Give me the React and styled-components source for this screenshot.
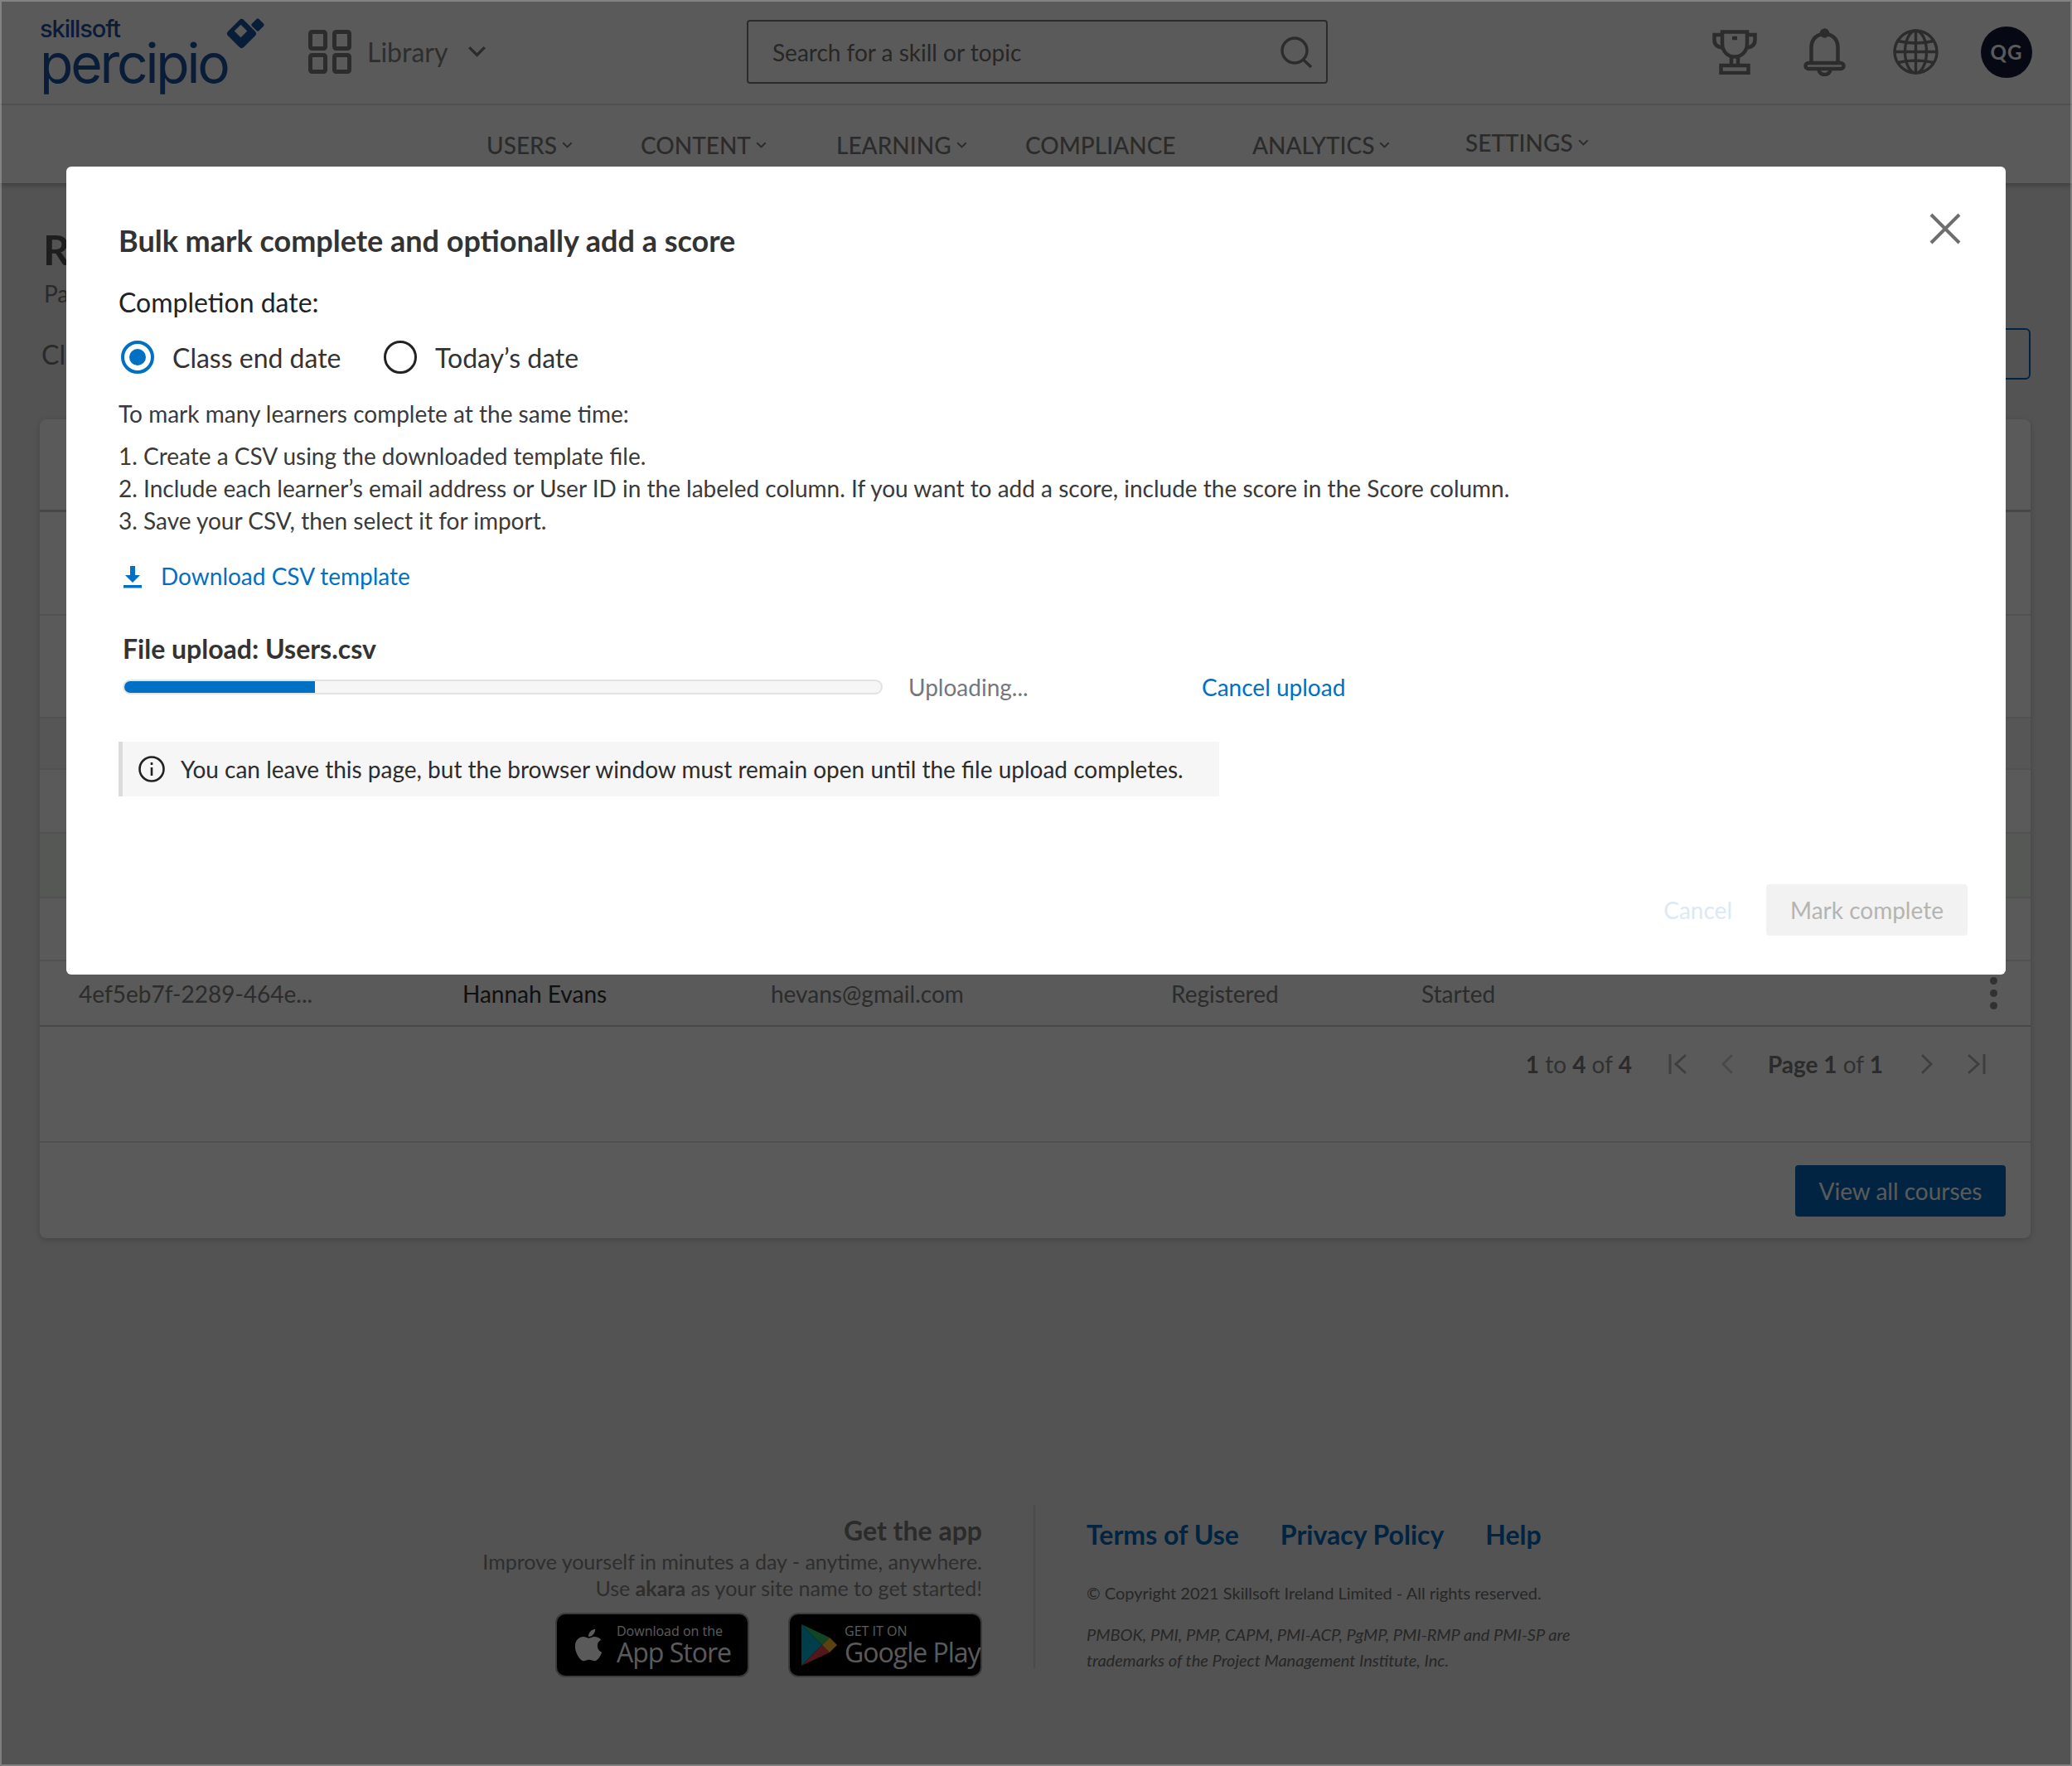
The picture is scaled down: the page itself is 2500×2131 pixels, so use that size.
import React from "react";
import styled, { createGlobalStyle } from "styled-components";
import { FaApple } from "react-icons/fa";

const GlobalStyle = createGlobalStyle`
	html, body {
		margin: 0;
		padding: 0;
		background: #ebebeb;
		font-family: Lato, "Open Sans", sans-serif;
	}
	* { box-sizing: border-box; }
`;

const Page = styled.div`
	position: relative;
	width: 2500px;
	height: 2131px;
	overflow: hidden;
	background: #ebebeb;
`;

const Header = styled.header`
	background: #fff;
	box-shadow: 0 3px 6px rgba(0, 0, 0, 0.25);
`;

const TopBar = styled.div`
	display: flex;
	align-items: center;
	height: 127px;
	padding-left: 48px;
	border-bottom: 2px solid #e2e2e2;
`;

const Logo = styled.div`
	display: flex;
	width: 324px;
	height: 127px;
	padding-top: 22px;
`;

const Wordmark = styled.div`
	display: flex;
	flex-direction: column;
	font-family: Inter, sans-serif;
	color: #1c4f9e;
`;

const BrandSmall = styled.span`
	font-size: 29px;
	line-height: 27px;
	font-weight: 500;
	letter-spacing: -1.1px;
`;

const BrandLarge = styled.span`
	font-size: 66px;
	line-height: 56px;
	font-weight: 400;
	letter-spacing: -3.2px;
`;

const Mark = styled.svg`
	width: 50px;
	height: 50px;
	margin: 0 0 0 -3px;
`;

const Library = styled.div`
	display: flex;
	align-items: center;
	width: 529px;
	font-size: 32px;
	color: #828282;
`;

const LibraryLabel = styled.span`
	margin: 0 24px 0 19px;
`;

const SearchBox = styled.div`
	display: flex;
	align-items: center;
	justify-content: space-between;
	width: 701px;
	height: 77px;
	padding: 0 16px 0 29px;
	border: 2px solid #7a7a7a;
	border-radius: 4px;
	background: #fff;
	font-size: 28px;
	color: #6e6e6e;
`;

const UserIcons = styled.div`
	display: flex;
	align-items: center;
	margin-left: auto;
	padding-right: 48px;
`;

const IconSlot = styled.svg`
	display: block;
	margin-right: ${(p) => p.$gap}px;
	fill: none;
	stroke: #7e7e7e;
	stroke-width: 4.5;
`;

const Avatar = styled.div`
	display: flex;
	align-items: center;
	justify-content: center;
	width: 62px;
	height: 62px;
	border-radius: 50%;
	background: #111c39;
	color: #fff;
	font-size: 24px;
	font-weight: 700;
	letter-spacing: 1px;
`;

const Nav = styled.nav`
	display: flex;
	height: 94px;
	padding: 30px 0 0 587px;
`;

const NavItem = styled.div`
	display: flex;
	align-items: center;
	height: 36px;
	width: ${(p) => p.$width}px;
	margin-top: ${(p) => p.$lift || 0}px;
	font-size: 28px;
	font-weight: 500;
	color: #7a7a7a;
	gap: 6px;
`;

const Content = styled.main`
	padding: 0 50px 0 48px;
`;

const Heading = styled.h1`
	margin: 50px 0 0 4px;
	font-size: 50px;
	line-height: 60px;
	font-weight: 700;
	color: #555;
`;

const Subheading = styled.div`
	margin: 5px 0 0 5px;
	font-size: 28px;
	line-height: 36px;
	color: #777;
`;

const ClassRow = styled.div`
	display: flex;
	align-items: center;
	justify-content: space-between;
	height: 62px;
	margin-top: 24px;
	padding-left: 2px;
	font-size: 32px;
	color: #777;
`;

const OutlineButton = styled.div`
	width: 250px;
	height: 62px;
	border: 2px solid #0068b8;
	border-radius: 6px;
`;

const Card = styled.section`
	margin-top: 48px;
	background: #fff;
	border-radius: 8px;
	box-shadow: 0 2px 8px rgba(0, 0, 0, 0.18);
`;

const TableHead = styled.div`
	height: 112px;
	border-bottom: 3px solid #c9c9c9;
`;

const Row = styled.div`
	display: flex;
	align-items: center;
	height: ${(p) => p.$height}px;
	padding-right: 40px;
	border-bottom: 2px solid ${(p) => p.$line || "#e6e6e6"};
	background: ${(p) => p.$tone || "#fff"};
`;

const Cell = styled.div`
	width: ${(p) => p.$width}px;
	margin-left: ${(p) => p.$indent || 0}px;
	font-size: 28px;
	color: ${(p) => (p.$strong ? "#2e2e2e" : "#7c7c7c")};
`;

const Kebab = styled.div`
	display: flex;
	flex-direction: column;
	gap: 6px;
	margin-left: auto;
`;

const Dot = styled.span`
	width: 9px;
	height: 9px;
	border-radius: 50%;
	background: #8a8a8a;
`;

const Pagination = styled.div`
	display: flex;
	align-items: center;
	justify-content: flex-end;
	height: 140px;
	padding: 0 54px 48px 0;
	border-bottom: 2px solid #e0e0e0;
	font-size: 28px;
	color: #8a8a8a;
`;

const PageCount = styled.span`
	margin: ${(p) => p.$margin};
`;

const Strong = styled.b`
	font-weight: 700;
	color: #7a7a7a;
`;

const PagerIcon = styled.svg`
	display: block;
	margin: ${(p) => p.$margin};
	fill: none;
	stroke: ${(p) => (p.$dim ? "#d0d0d0" : "#b2b2b2")};
	stroke-width: 3;
`;

const CardFooter = styled.div`
	display: flex;
	justify-content: flex-end;
	height: 115px;
	padding: 27px 30px 0 0;
`;

const PrimaryButton = styled.div`
	display: flex;
	align-items: center;
	justify-content: center;
	width: 254px;
	height: 62px;
	border-radius: 4px;
	background: #0068b8;
	color: #fff;
	font-size: 28px;
`;

const Footer = styled.footer`
	display: flex;
	align-items: flex-start;
	margin-top: 322px;
`;

const AppColumn = styled.div`
	display: flex;
	flex-direction: column;
	align-items: flex-end;
	width: 1137px;
	padding-top: 13px;
	color: #838383;
	font-size: 25px;
	line-height: 32px;
	text-align: right;
`;

const AppTitle = styled.div`
	margin-bottom: 3px;
	font-size: 32px;
	line-height: 36px;
	font-weight: 700;
	color: #7a7a7a;
`;

const Badges = styled.div`
	display: flex;
	gap: 47px;
	margin-top: 14px;
`;

const Badge = styled.div`
	display: flex;
	align-items: center;
	width: 234px;
	height: 78px;
	padding-left: ${(p) => p.$pad}px;
	gap: ${(p) => p.$gap}px;
	border: 2px solid #a6a6a6;
	border-radius: 12px;
	background: #000;
	color: #fff;
	text-align: left;
`;

const BadgeText = styled.div`
	display: flex;
	flex-direction: column;
`;

const BadgeSmall = styled.span`
	font-size: 16px;
	line-height: 17px;
	font-family: "Open Sans", sans-serif;
`;

const BadgeLarge = styled.span`
	font-size: 32px;
	line-height: 34px;
	font-family: "Open Sans", sans-serif;
	letter-spacing: -1px;
`;

const FooterDivider = styled.div`
	flex: none;
	width: 2px;
	height: 198px;
	margin: 0 62px 0 62px;
	background: #d4d4d4;
`;

const LegalColumn = styled.div`
	padding-top: 16px;
`;

const FooterLinks = styled.div`
	display: flex;
	gap: 50px;
	font-size: 32px;
	line-height: 40px;
	font-weight: 700;
	color: #0068b8;
`;

const Copyright = styled.div`
	margin-top: 35px;
	font-size: 20px;
	line-height: 30px;
	color: #6e6e6e;
`;

const Trademark = styled.div`
	margin-top: 20px;
	font-size: 20px;
	line-height: 31px;
	font-style: italic;
	color: #6e6e6e;
`;

const Backdrop = styled.div`
	position: absolute;
	inset: 0;
	border: 2px solid rgba(255, 255, 255, 0.25);
	background: rgba(0, 0, 0, 0.647);
`;

const Modal = styled.div`
	position: absolute;
	left: 80px;
	top: 201px;
	width: 2340px;
	height: 975px;
	padding: 67px 46px 0 63px;
	border-radius: 6px;
	background: #fff;
	color: #333;
`;

const CloseButton = styled.svg`
	position: absolute;
	top: 56px;
	right: 54px;
	stroke: #6e6e6e;
	stroke-width: 4;
`;

const ModalTitle = styled.h2`
	margin: 0;
	font-size: 36px;
	line-height: 44px;
	font-weight: 700;
	color: #333;
`;

const FieldLabel = styled.div`
	margin-top: 33px;
	font-size: 32px;
	line-height: 40px;
	color: #222;
`;

const RadioGroup = styled.div`
	display: flex;
	align-items: center;
	height: 40px;
	margin: 26px 0 0 3px;
	font-size: 32px;
	color: #333;
`;

const Radio = styled.span`
	display: flex;
	align-items: center;
	justify-content: center;
	flex: none;
	width: 40px;
	height: 40px;
	margin-right: 22px;
	border-radius: 50%;
	border: ${(p) => (p.$on ? "4px solid #0070c4" : "3px solid #222")};
`;

const RadioDot = styled.span`
	width: 20px;
	height: 20px;
	border-radius: 50%;
	background: #0070c4;
`;

const RadioLabel = styled.span`
	width: ${(p) => p.$width}px;
`;

const Instruction = styled.p`
	margin: 29px 0 0;
	font-size: 28px;
	line-height: 39px;
	color: #3a3a3a;
`;

const Steps = styled.div`
	margin-top: 12px;
	font-size: 28px;
	line-height: 39px;
	color: #3a3a3a;
`;

const DownloadLink = styled.div`
	display: flex;
	align-items: center;
	gap: 22px;
	margin: 28px 0 0 5px;
	font-size: 28px;
	line-height: 39px;
	color: #0070c4;
`;

const UploadTitle = styled.div`
	margin: 48px 0 0 5px;
	font-size: 32px;
	line-height: 40px;
	font-weight: 700;
	color: #333;
`;

const UploadRow = styled.div`
	display: flex;
	align-items: center;
	height: 40px;
	margin: 6px 0 0 5px;
	font-size: 28px;
`;

const Track = styled.div`
	flex: none;
	width: 917px;
	height: 18px;
	overflow: hidden;
	border: 2px solid #e2e2e2;
	border-radius: 9px;
	background: #f6f6f6;
`;

const Fill = styled.div`
	width: ${(p) => p.$pct}%;
	height: 100%;
	background: #0070c4;
	outline: 2px solid #0070c4;
`;

const UploadStatus = styled.span`
	width: 354px;
	margin-left: 31px;
	color: #777;
`;

const TextLink = styled.span`
	color: #0070c4;
`;

const InfoBox = styled.div`
	display: flex;
	align-items: center;
	gap: 19px;
	width: 1328px;
	height: 66px;
	margin-top: 46px;
	padding-left: 19px;
	border-left: 5px solid #dcdcdc;
	background: #f6f6f6;
	font-size: 28px;
	color: #2c2c2c;
`;

const ModalActions = styled.div`
	display: flex;
	align-items: center;
	justify-content: flex-end;
	gap: 41px;
	margin-top: 106px;
	font-size: 28px;
`;

const GhostAction = styled.span`
	color: #dce9f5;
`;

const DisabledAction = styled.div`
	display: flex;
	align-items: center;
	justify-content: center;
	width: 243px;
	height: 62px;
	border-radius: 4px;
	background: #f2f2f2;
	color: #b4b4b4;
`;

const Chevron = ({ size = 16 }) => (
	<svg width={size} height={size * 0.62} viewBox="0 0 16 10" fill="none" stroke="#7a7a7a" strokeWidth="2.4">
		<path d="M1.5 1.5 8 8l6.5-6.5" />
	</svg>
);

const navItems = [
	{ label: "USERS", width: 186, arrow: true },
	{ label: "CONTENT", width: 236, arrow: true },
	{ label: "LEARNING", width: 228, arrow: true },
	{ label: "COMPLIANCE", width: 274 },
	{ label: "ANALYTICS", width: 257, arrow: true },
	{ label: "SETTINGS", width: 200, arrow: true, lift: -3 },
];

const bodyRows = [
	{ height: 125 },
	{ height: 124 },
	{ height: 62, tone: "#f3f3f3" },
	{ height: 77 },
	{ height: 78, tone: "#f4f8f4" },
	{ height: 76 },
];

export default function App() {
	return (
		<Page>
			<GlobalStyle />
			<Header>
				<TopBar>
					<Logo>
						<Wordmark>
							<BrandSmall>skillsoft</BrandSmall>
							<BrandLarge>percipio</BrandLarge>
						</Wordmark>
						<Mark viewBox="0 0 50 50">
							<g fill="#1c4f9e">
								<rect x="6" y="6" width="27" height="27" rx="4" transform="rotate(45 19.5 19.5)" />
								<rect x="33" y="3" width="12" height="12" rx="2" transform="rotate(45 39 9)" />
							</g>
							<rect x="13" y="11" width="11" height="11" fill="#fff" transform="rotate(45 18.5 16.5)" />
						</Mark>
					</Logo>
					<Library>
						<svg width="52" height="53" viewBox="0 0 52 53" fill="none" stroke="#7e7e7e" strokeWidth="5">
							<rect x="2.5" y="2.5" width="18" height="20" rx="2" />
							<rect x="31.5" y="2.5" width="18" height="20" rx="2" />
							<rect x="2.5" y="30.5" width="18" height="20" rx="2" />
							<rect x="31.5" y="30.5" width="18" height="20" rx="2" />
						</svg>
						<LibraryLabel>Library</LibraryLabel>
						<Chevron size={23} />
					</Library>
					<SearchBox>
						<span>Search for a skill or topic</span>
						<svg width="40" height="40" viewBox="0 0 40 40" fill="none" stroke="#7e7e7e" strokeWidth="3.5">
							<circle cx="18" cy="18" r="15" />
							<path d="M28.5 29 38 38" />
						</svg>
					</SearchBox>
					<UserIcons>
						<IconSlot $gap={56} width="54" height="54" viewBox="0 0 54 54">
							<path d="M12 2.5h30v14c0 10-7 16-15 16s-15-6-15-16z" />
							<path d="M12 6H2.5v6c0 6 4 9 10 9.500M42 6h9.500v6c0 6-4 9-10 9.500" />
							<path d="M23 33v10M31 33v10M24 10h6" />
							<rect x="10.500" y="43" width="33" height="9" />
						</IconSlot>
						<IconSlot $gap={57} width="51" height="58" viewBox="0 0 51 58">
							<path d="M9.500 43V23c0-10 7-16 16-16s16 6 16 16v20" />
							<circle cx="25.500" cy="6" r="3.500" />
							<rect x="2.500" y="42" width="46" height="7" rx="3.500" />
							<path d="M18.500 50a7 6 0 0 0 14 0" />
						</IconSlot>
						<IconSlot $gap={51} width="55" height="55" viewBox="0 0 55 55" style={{ strokeWidth: 3.4 }}>
							<circle cx="27.500" cy="27.500" r="25.500" />
							<ellipse cx="27.500" cy="27.500" rx="13" ry="25.500" />
							<path d="M27.500 2v51M2 27.500h51M6 14.500c13 3 30 3 43 0M6 40.500c13-3 30-3 43 0" />
						</IconSlot>
						<Avatar>QG</Avatar>
					</UserIcons>
				</TopBar>
				<Nav>
					{navItems.map((item) => (
						<NavItem key={item.label} $width={item.width} $lift={item.lift}>
							{item.label}
							{item.arrow && <Chevron size={13} />}
						</NavItem>
					))}
				</Nav>
			</Header>
			<Content>
				<Heading>Registrations</Heading>
				<Subheading>Participants</Subheading>
				<ClassRow>
					<span>Class</span>
					<OutlineButton />
				</ClassRow>
				<Card>
					<TableHead />
					{bodyRows.map((row, i) => (
						<Row key={i} $height={row.height} $tone={row.tone} />
					))}
					<Row $height={79} $tone="#fbfefb" $line="#cfcfcf">
						<Cell $indent={47} $width={463}>4ef5eb7f-2289-464e...</Cell>
						<Cell $strong $width={372}>Hannah Evans</Cell>
						<Cell $width={483}>hevans@gmail.com</Cell>
						<Cell $width={302}>Registered</Cell>
						<Cell $width={200}>Started</Cell>
						<Kebab>
							<Dot />
							<Dot />
							<Dot />
						</Kebab>
					</Row>
					<Pagination>
						<PageCount $margin="0 44px 0 0">
							<Strong>1</Strong> to <Strong>4</Strong> of <Strong>4</Strong>
						</PageCount>
						<PagerIcon width="24" height="26" viewBox="0 0 24 26">
							<path d="M2 1v24M21 2 9 13l12 11" />
						</PagerIcon>
						<PagerIcon $dim $margin="0 0 0 40px" width="14" height="26" viewBox="0 0 14 26">
							<path d="M13 2 2 13l11 11" />
						</PagerIcon>
						<PageCount $margin="0 46px 0 42px">
							<Strong>Page 1</Strong> of <Strong>1</Strong>
						</PageCount>
						<PagerIcon width="14" height="26" viewBox="0 0 14 26">
							<path d="m1 2 11 11L1 24" />
						</PagerIcon>
						<PagerIcon $margin="0 0 0 40px" width="24" height="26" viewBox="0 0 24 26">
							<path d="M22 1v24M3 2l12 11L3 24" />
						</PagerIcon>
					</Pagination>
					<CardFooter>
						<PrimaryButton>View all courses</PrimaryButton>
					</CardFooter>
				</Card>
				<Footer>
					<AppColumn>
						<AppTitle>Get the app</AppTitle>
						<div>Improve yourself in minutes a day - anytime, anywhere.</div>
						<div>
							Use <b>akara</b> as your site name to get started!
						</div>
						<Badges>
							<Badge $pad={16} $gap={12}>
								<FaApple size={44} />
								<BadgeText>
									<BadgeSmall>Download on the</BadgeSmall>
									<BadgeLarge>App Store</BadgeLarge>
								</BadgeText>
							</Badge>
							<Badge $pad={12} $gap={8}>
								<svg width="46" height="54" viewBox="0 0 46 54">
									<path d="M2 2v50l25-25z" fill="#00b0d8" />
									<path d="M2 2l25 25 9-9z" fill="#34c46c" />
									<path d="M2 52l25-25 9 9z" fill="#e8404c" />
									<path d="M36 18 27 27l9 9 9-9z" fill="#fbc02d" />
								</svg>
								<BadgeText>
									<BadgeSmall>GET IT ON</BadgeSmall>
									<BadgeLarge>Google Play</BadgeLarge>
								</BadgeText>
							</Badge>
						</Badges>
					</AppColumn>
					<FooterDivider />
					<LegalColumn>
						<FooterLinks>
							<span>Terms of Use</span>
							<span>Privacy Policy</span>
							<span>Help</span>
						</FooterLinks>
						<Copyright>© Copyright 2021 Skillsoft Ireland Limited - All rights reserved.</Copyright>
						<Trademark>
							PMBOK, PMI, PMP, CAPM, PMI-ACP, PgMP, PMI-RMP and PMI-SP are
							<br />
							trademarks of the Project Management Institute, Inc.
						</Trademark>
					</LegalColumn>
				</Footer>
			</Content>
			<Backdrop />
			<Modal>
				<CloseButton width="38" height="38" viewBox="0 0 38 38">
					<path d="M2 2l34 34M36 2 2 36" />
				</CloseButton>
				<ModalTitle>Bulk mark complete and optionally add a score</ModalTitle>
				<FieldLabel>Completion date:</FieldLabel>
				<RadioGroup>
					<Radio $on>
						<RadioDot />
					</Radio>
					<RadioLabel $width={255}>Class end date</RadioLabel>
					<Radio />
					<RadioLabel>Today’s date</RadioLabel>
				</RadioGroup>
				<Instruction>To mark many learners complete at the same time:</Instruction>
				<Steps>
					<div>1. Create a CSV using the downloaded template file.</div>
					<div>
						2. Include each learner’s email address or User ID in the labeled column. If you want to add a score,
						include the score in the Score column.
					</div>
					<div>3. Save your CSV, then select it for import.</div>
				</Steps>
				<DownloadLink>
					<svg width="24" height="28" viewBox="0 0 24 28" fill="#0070c4">
						<path d="M9 1h6v11h6L12 21 3 12h6z" />
						<rect x="1" y="24" width="22" height="3.500" />
					</svg>
					Download CSV template
				</DownloadLink>
				<UploadTitle>File upload: Users.csv</UploadTitle>
				<UploadRow>
					<Track>
						<Fill $pct={25} />
					</Track>
					<UploadStatus>Uploading...</UploadStatus>
					<TextLink>Cancel upload</TextLink>
				</UploadRow>
				<InfoBox>
					<svg width="32" height="32" viewBox="0 0 32 32" fill="none" stroke="#222" strokeWidth="2.600">
						<circle cx="16" cy="16" r="14.500" />
						<path d="M16 14v10M16 8v3" />
					</svg>
					You can leave this page, but the browser window must remain open until the file upload completes.
				</InfoBox>
				<ModalActions>
					<GhostAction>Cancel</GhostAction>
					<DisabledAction>Mark complete</DisabledAction>
				</ModalActions>
			</Modal>
		</Page>
	);
}
